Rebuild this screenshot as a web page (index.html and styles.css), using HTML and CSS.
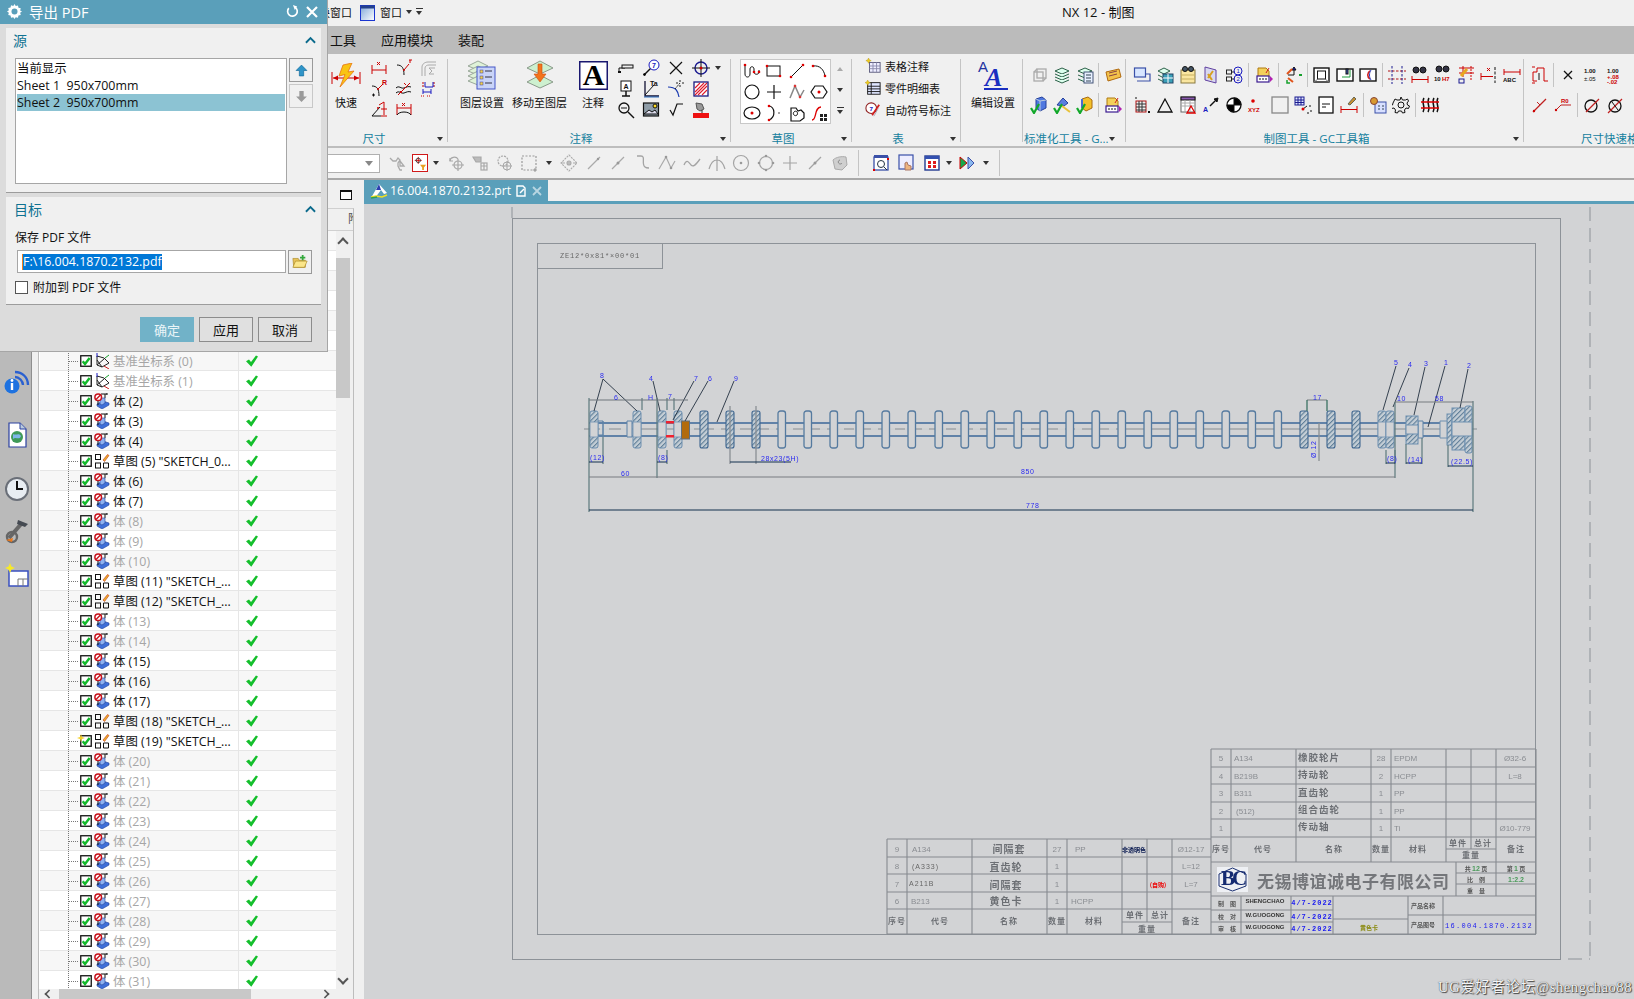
FILE: index.html
```html
<!DOCTYPE html>
<html lang="zh-CN">
<head>
<meta charset="utf-8">
<title>NX 12 - 制图</title>
<link rel="stylesheet" href="styles.css">
</head>
<body>
<svg class="defs" width="0" height="0" aria-hidden="true">
  <symbol id="cb" viewBox="0 0 12 12"><rect x=".75" y=".75" width="10.5" height="10.5" fill="#fff" stroke="#111" stroke-width="1.3"/><path d="M2.7 6.2 5 9l4.6-6" fill="none" stroke="#12b82a" stroke-width="2.4"/></symbol>
  <symbol id="ok" viewBox="0 0 12 12"><path d="M0 6.2 3 4.4l2 2.7L10 .4 12 1.6 5.3 11.8z" fill="#14bf2c"/></symbol>
  <symbol id="bd" viewBox="0 0 16 16"><path d="M7 1h6M13 0v2M11 1v4" stroke="#111" fill="none"/><path d="M3 11l6-3 6 2v2l-7 4-5-3z" fill="#3f6fd8" stroke="#24449c" stroke-width=".6"/><path d="M6 5h5v5l-3 2-2-1z" fill="#8fb2f0" stroke="#24449c" stroke-width=".6"/><circle cx="4.2" cy="4.2" r="3.3" fill="#fff" stroke="#c8121c" stroke-width="1.5"/><path d="M2 6.4 6.4 2" stroke="#c8121c" stroke-width="1.4"/><path d="M4 8v4" stroke="#111"/></symbol>
  <symbol id="sk" viewBox="0 0 16 16"><g fill="none" stroke="#111"><rect x="1.5" y="1.5" width="5" height="5"/><rect x="1.5" y="10" width="5" height="5"/><path d="M9.5 10h5v5h-5z"/></g><path d="M9 7l4.500-5.500 1.500 1L10.500 8.500z" fill="#e9b22b" stroke="#c8301c" stroke-width=".6"/></symbol>
  <symbol id="cs" viewBox="0 0 16 16"><g fill="none" stroke="#222"><path d="M3 3v9l5 2 7-4-5-5z"/><path d="M3 12l7-6M3 7l5 7"/></g><path d="M3 4V0" stroke="#1a1ac0"/><path d="M11 5l4-3" stroke="#16a02c"/><path d="M10 13l5 3" stroke="#c81c1c"/></symbol>
</svg>

<div class="app">
  <header class="titlebar">
    <span class="qa-text">切换窗口</span>
    <svg class="winicon" viewBox="0 0 15 16"><defs><linearGradient id="wg" x1="0" y1="0" x2="1" y2="1"><stop offset="0" stop-color="#7da6d8"/><stop offset="1" stop-color="#fff"/></linearGradient></defs><rect x=".5" y=".5" width="14" height="15" fill="url(#wg)" stroke="#1a35d0"/><rect x=".5" y=".5" width="14" height="3" fill="#24408c"/></svg>
    <span class="qa-label">窗口</span>
    <span class="tri qa-tri"></span>
    <span class="tri-menu"></span>
    <span class="apptitle">NX 12 - 制图</span>
  </header>

  <nav class="menubar">
    <span>工具</span><span>应用模块</span><span>装配</span>
  </nav>

  <section class="ribbon">
    <div class="group g1">
      <div class="gbody">
        <div class="big b-quick">
          <div class="bigicon"><svg class="q" viewBox="0 0 30 24"><path d="M1 9v12M29 9v12" stroke="#c00" fill="none"/><path d="M2 15h26" stroke="#c00" fill="none"/><path d="M2 15l5-2.500v5zM28 15l-5-2.500v5z" fill="#c00"/><path d="M21 0 12 2 8 13l6-1.500L9 24 23 8l-6 1z" fill="#f9c414" stroke="#e8720c" stroke-width=".8"/></svg></div>
          <span>快速</span>
        </div>
        <div class="ig ig3">
          <svg class="i" viewBox="0 0 18 18"><path d="M2 6v9M16 6v9M2 11h14" stroke="#c00"/><path d="M7 3l3 3M10 3 7 6" stroke="#c00"/></svg>
          <svg class="i" viewBox="0 0 18 18"><path d="M2 6c5 0 7 3 7 10" /><path d="M9 11l5-6" stroke="#c00"/><circle cx="9" cy="11" r="1" fill="#c00" stroke="none"/><path d="M14 1h3" stroke="#c00"/><path d="M15 1v3" stroke="#c00"/></svg>
          <svg class="i" viewBox="0 0 18 18"><g stroke="#aaa"><path d="M2 17V8c0-3 3-5 6-5h8M5 17V9c0-2 2-3 4-3h7"/><path d="M9 9h6M14 15H9l3-3-3-3"/></g></svg>
          <svg class="i" viewBox="0 0 18 18"><path d="M2 6c5 0 7 3 7 10"/><path d="M8 9l5-5" stroke="#c00"/><circle cx="8" cy="9" r="1" fill="#c00" stroke="none"/><text class="it red" x="12" y="5">R</text><path d="M2 15h3M3.500 13.500v3"/></svg>
          <svg class="i" viewBox="0 0 18 18"><path d="M1 8c3-3 5 1 8 0s4-2 7-1M1 13c3-3 5 1 8 0s4-2 7-1"/><path d="M3 15 15 3" stroke="#c00"/><path d="M9 3l2 2M5 11l2 2" stroke="#c00"/></svg>
          <svg class="i" viewBox="0 0 18 18"><g stroke="#b00" stroke-dasharray="2 1"><path d="M2 3h3M2 6h3M13 3h3M13 6h3"/></g><path d="M5 2v5h8V2M3 14v-5M11 9v5M3 12h8" stroke="#1a1ac0"/><path d="M1 16h3M7 16h3" stroke="#c00" stroke-dasharray="1 1"/></svg>
          <svg class="i" viewBox="0 0 18 18"><path d="M2 15 10 6M2 15h9"/><path d="M9 4 14 1v13M11 15h6M11 8h6" stroke="#c00"/><circle cx="8" cy="7" r="1" fill="#c00" stroke="none"/></svg>
          <svg class="i" viewBox="0 0 18 18"><path d="M2 3v11M16 3v11M2 7h14" stroke="#c00"/><path d="M7 2l3 3M10 2 7 5" stroke="#c00"/><path d="M2 14c2-4 12-4 14 0" /></svg>
        </div>
      </div>
      <div class="glabel"><span class="gl gl1">尺寸</span><span class="ga"></span></div>
    </div>

    <div class="group g2">
      <div class="gbody">
        <div class="big b-layer">
          <div class="bigicon"><svg class="bg1" viewBox="0 0 30 30"><g fill="#dff2d8" stroke="#9aa89a"><path d="M1 6 11 1l10 5-10 4z"/><path d="M1 11l10-5 10 5-10 4z"/><path d="M1 16l10-5 10 5-10 4z"/><path d="M1 21l10-5 10 5-10 4z"/></g><rect x="10" y="7" width="18" height="22" fill="#c9d4f8" stroke="#4456c8"/><g fill="#f2d24a" stroke="#3a3aa0" stroke-width=".5"><rect x="13" y="10" width="3" height="3"/><rect x="13" y="16" width="3" height="3"/><rect x="13" y="22" width="3" height="3"/></g><path d="M18 11h7M18 17h7M18 23h7" stroke="#334"/></svg></div>
          <span>图层设置</span>
        </div>
        <div class="big b-move">
          <div class="bigicon"><svg class="bg1" viewBox="0 0 30 30"><g fill="#cdf0cf" stroke="#8a9a8a"><path d="M2 8 15 1l13 7-13 6z"/><path d="M2 22l13-7 13 7-13 6z"/></g><path d="M13 4h4v10h4l-6 8-6-8h4z" fill="#f2741c" stroke="#d04a0c" stroke-width=".6"/></svg></div>
          <span>移动至图层</span>
        </div>
        <div class="big b-note">
          <div class="bigicon"><svg class="ba" viewBox="0 0 29 29"><rect x=".75" y=".75" width="27.500" height="27.500" fill="#fff" stroke="#1a1870" stroke-width="1.500"/><text x="14.500" y="24" class="bigA">A</text></svg></div>
          <span>注释</span>
        </div>
        <div class="ig ig4">
          <svg class="i" viewBox="0 0 18 18"><path d="M2 13V9h6" /><rect x="5" y="6" width="11" height="3" fill="#eee"/><path d="M1 13h3" stroke-width="2"/></svg>
          <svg class="i" viewBox="0 0 18 18"><path d="M2 16 10 8" stroke-width="1.500"/><circle cx="2.500" cy="15.500" r="1" fill="#000"/><circle cx="12" cy="6" r="5" stroke="#1a1ac0" fill="#fff"/><text class="it blue" x="10" y="9">7</text></svg>
          <svg class="i" viewBox="0 0 18 18"><path d="M3 3l12 12M15 3 3 15" stroke-width="1.200"/></svg>
          <svg class="i" viewBox="0 0 18 18"><circle cx="9" cy="9" r="6" stroke="#1a1a90" stroke-width="1.400"/><path d="M9 0v18M0 9h18"/><circle cx="9" cy="9" r="1.500" fill="#c00" stroke="none"/></svg>
          <span class="tri"></span>
          <svg class="i rs" viewBox="0 0 18 18"><rect x="4" y="1" width="10" height="10" fill="#fff"/><text class="it" x="6.500" y="9">A</text><path d="M9 11v5M5 16h8" stroke-width="1.500"/></svg>
          <svg class="i" viewBox="0 0 18 18"><path d="M3 1v15h14" stroke="#113" stroke-width="1.300"/><path d="M3 15 12 5" /><text class="it" x="8" y="6">Ta</text><path d="M2 17h15" stroke="#2a6fc0"/></svg>
          <svg class="i" viewBox="0 0 18 18"><path d="M1 7c8 0 10 4 11 10" stroke="#1a3ab0" stroke-width="1.200"/><path d="M8 9l5-6" stroke="#222" stroke-dasharray="2 1"/><path d="M13 0v2M13 5v2M9 3h2M15 3h2" stroke="#222"/></svg>
          <svg class="i" viewBox="0 0 18 18"><rect x="2" y="2" width="14" height="14" fill="#fff" stroke="#1a1a80" stroke-width="1.300"/><path d="M3 12l9-9M3 8l5-5M6 15l9-9M10 15l5-5M3 15 15 3" stroke="#e01c2c" stroke-width="1.100"/></svg>
          <svg class="i rs" viewBox="0 0 18 18"><circle cx="7" cy="7" r="5" stroke-width="1.300"/><path d="M4 7h6"/><path d="M11 11l6 6" stroke-width="1.400"/></svg>
          <svg class="i" viewBox="0 0 18 18"><rect x="1.500" y="2" width="15" height="13" fill="#8f9da8" stroke="#111" stroke-width="1.200"/><path d="M2 13l5-4 3 2 3-2 3 4z" fill="#dde"/><circle cx="13" cy="5" r="2" fill="#fd2"/></svg>
          <svg class="i" viewBox="0 0 18 18"><path d="M3 9l3 5 4-11h6" stroke-width="1.200"/></svg>
          <svg class="i" viewBox="0 0 18 18"><path d="M4 2l6 1 2 5-4 2-3-2z" fill="#999" stroke="#555"/><path d="M10 9v3" stroke="#333"/><rect x="1" y="12" width="16" height="5" fill="#ee1111" stroke="none"/></svg>
        </div>
      </div>
      <div class="glabel"><span class="gl">注释</span><span class="ga"></span></div>
    </div>

    <div class="group g3">
      <div class="gbody">
        <div class="gallery">
          <svg class="i" viewBox="0 0 18 18"><path d="M2 3v9c0 4 5 4 5 0V7c0-3 4-3 4 0v3c0 3 5 3 5 0V8"/><g fill="#d00" stroke="none"><circle cx="2" cy="3" r="1.300"/><circle cx="11" cy="10" r="1.300"/><circle cx="16" cy="10" r="1.300"/></g></svg>
          <svg class="i" viewBox="0 0 18 18"><rect x="2" y="4" width="13" height="10"/><circle cx="2" cy="4" r="1.300" fill="#d00" stroke="none"/><circle cx="15" cy="14" r="1.300" fill="#d00" stroke="none"/></svg>
          <svg class="i" viewBox="0 0 18 18"><path d="M3 15 15 3"/><circle cx="3" cy="15" r="1.300" fill="#d00" stroke="none"/><circle cx="15" cy="3" r="1.300" fill="#d00" stroke="none"/></svg>
          <svg class="i" viewBox="0 0 18 18"><path d="M3 4c7-1 11 4 12 10"/><circle cx="3" cy="4" r="1.300" fill="#d00" stroke="none"/><circle cx="15" cy="14" r="1.300" fill="#d00" stroke="none"/></svg>
          <svg class="i" viewBox="0 0 18 18"><circle cx="9" cy="9" r="7" stroke-width="1.200"/></svg>
          <svg class="i" viewBox="0 0 18 18"><path d="M9 2v14M2 9h14" stroke-width="1.200"/></svg>
          <svg class="i" viewBox="0 0 18 18"><path d="M2 15 7 3l5 11 4-7" stroke="#888" stroke-width="1.500"/><g fill="#d33" stroke="none"><circle cx="7" cy="3" r="1.300"/><circle cx="12" cy="14" r="1.300"/></g></svg>
          <svg class="i" viewBox="0 0 18 18"><path d="M5 3h8l4 6-4 6H5L1 9z" stroke-width="1.200"/><circle cx="9" cy="9" r="1.500" fill="#d00" stroke="none"/></svg>
          <svg class="i" viewBox="0 0 18 18"><ellipse cx="9" cy="9" rx="8" ry="6" stroke-width="1.200"/><circle cx="9" cy="9" r="1.500" fill="#d00" stroke="none"/></svg>
          <svg class="i" viewBox="0 0 18 18"><path d="M4 2c6 1 7 11 0 14" stroke-width="1.200"/><g fill="#d00" stroke="none"><circle cx="4" cy="2" r="1.300"/><circle cx="4" cy="16" r="1.300"/></g><circle cx="14" cy="9" r="1" fill="#888" stroke="none"/></svg>
          <svg class="i" viewBox="0 0 18 18"><path d="M3 4h5l2 3 3-1 3 3v5l-4 3H3z" stroke-width="1.200"/><path d="M6 8c1-2 5 0 3 3-2 2-5-1-3-3z"/></svg>
          <svg class="i" viewBox="0 0 18 18"><path d="M2 16c5 0 2-13 9-13" stroke="#d00" stroke-width="1.300"/><g fill="#222" stroke="none"><rect x="10" y="10" width="3" height="3"/><rect x="14" y="10" width="3" height="3"/><rect x="10" y="14" width="3" height="3"/><rect x="14" y="14" width="3" height="3"/></g></svg>
        </div>
        <div class="galside"><span class="tri up"></span><span class="tri"></span><span class="tri-menu"></span></div>
      </div>
      <div class="glabel"><span class="gl">草图</span><span class="ga"></span></div>
    </div>

    <div class="group g4">
      <div class="gbody tlist">
        <div class="tline"><svg class="i16" viewBox="0 0 18 18"><rect x="5" y="5" width="12" height="11" fill="#eef" stroke="#557"/><path d="M5 9h12M5 12h12M9 5v11M13 5v11" stroke="#88a"/><path d="M4 0l1 2 2 1-2 1-1 2-1-2-2-1 2-1z" fill="#ec2" stroke="#a80" stroke-width=".4"/></svg><span>表格注释</span></div>
        <div class="tline"><svg class="i16" viewBox="0 0 18 18"><rect x="3" y="3" width="14" height="13" fill="#dfe6ff" stroke="#111"/><path d="M3 7h14M3 10h14M3 13h14M7 3v13" stroke="#111"/><path d="M3 0l1 2 2 1-2 1-1 2-1-2-2-1 2-1z" fill="#ec2" stroke="#a80" stroke-width=".4"/></svg><span>零件明细表</span></div>
        <div class="tline"><svg class="i16" viewBox="0 0 18 18"><circle cx="7" cy="7" r="6" fill="#fff" stroke="#902020" stroke-width="1.200"/><text class="it blue" x="5" y="10">7</text><path d="M8 15 16 3" stroke="#d02020" stroke-width="2"/><path d="M10 16l5-9" stroke="#aab" stroke-width="1"/></svg><span>自动符号标注</span></div>
      </div>
      <div class="glabel"><span class="gl">表</span><span class="ga"></span></div>
    </div>

    <div class="group g5">
      <div class="gbody">
        <div class="big b-edit">
          <div class="bigicon"><svg class="bg2" viewBox="0 0 32 34"><text x="1" y="14" class="aa1">A</text><text x="8" y="28" class="aa2">A</text><path d="M7 31h24" stroke="#1a2ec0" stroke-width="2"/></svg></div>
          <span>编辑设置</span>
        </div>
      </div>
      <div class="glabel"><span class="gl"></span></div>
    </div>

    <div class="group g6">
      <div class="gbody">
        <div class="irow">
          <svg class="ic" viewBox="0 0 18 18"><g stroke="#aaa" stroke-width="1.300"><rect x="4" y="6" width="9" height="9"/><rect x="7" y="3" width="9" height="9"/><path d="M4 6l3-3M13 15l3-3"/></g></svg>
          <svg class="ic" viewBox="0 0 18 18"><g stroke="#2c6048" fill="#dfe"><path d="M2 5l7-3 7 3-7 3z"/><path d="M2 8l7 3 7-3"/><path d="M2 11l7 3 7-3"/><path d="M2 14l7 3 7-3"/></g></svg>
          <svg class="ic" viewBox="0 0 18 18"><g stroke="#2c6048" fill="#dfe"><path d="M2 5l7-3 7 3-7 3z"/><path d="M2 9l7 3 7-3"/><path d="M2 13l7 3 7-3"/></g><rect x="8" y="6" width="9" height="11" fill="#e8f0ff" stroke="#457"/><path d="M10 9h5M10 12h5M10 15h5" stroke="#345"/></svg>
          <span class="vs vs-n"></span>
          <svg class="ic" viewBox="0 0 18 18"><path d="M2 6l13-3 2 8-13 4z" fill="#f3c24a" stroke="#b06a10"/><path d="M5 7l8-2M5 10l8-2" stroke="#844"/></svg>
        </div>
        <div class="irow">
          <svg class="ic" viewBox="0 0 18 18"><path d="M6 3l6-2 4 3v8l-6 3-4-3z" fill="#4f78e0" stroke="#24409c"/><path d="M10 15V5l6-1M10 5 6 3" stroke="#bcd"/><path d="M1 12l3 5 5-9" stroke="#12a82a" stroke-width="2.200"/></svg>
          <svg class="ic" viewBox="0 0 18 18"><path d="M4 9l6-7 5 5-4 3z" fill="#5a7ee0" stroke="#24409c"/><path d="M9 10l8 6" stroke="#e8c23a" stroke-width="2"/><path d="M1 12l3 5 5-9" stroke="#12a82a" stroke-width="2.200"/></svg>
          <svg class="ic" viewBox="0 0 18 18"><path d="M6 3l6-2 4 3v8l-6 3-4-3z" fill="#f3c12a" stroke="#a86a10"/><path d="M6 3v9" stroke="#4a6cd0" stroke-width="2"/><path d="M1 12l3 5 5-9" stroke="#12a82a" stroke-width="2.200"/></svg>
          <span class="vs vs-n"></span>
          <svg class="ic" viewBox="0 0 18 18"><path d="M3 2h8l3 3v6H3z" fill="#f3d15a" stroke="#b07a10"/><rect x="2" y="10" width="12" height="6" fill="#fff" stroke="#3a1a90" stroke-width="1.200"/><path d="M4 13h2M7 13h2M10 13h2" stroke="#111"/><path d="M15 10l3 3-3 3z" fill="#b020b0" stroke="none"/><path d="M14 2l-3 5" stroke="#d02020"/></svg>
        </div>
      </div>
      <div class="glabel"><span class="gl gl-left">标准化工具 - G...</span><span class="ga ga-n"></span></div>
    </div>

    <div class="group g7">
      <div class="gbody">
        <div class="irow">
          <svg class="ic" viewBox="0 0 18 18"><rect x="1.500" y="2" width="11" height="9" fill="#d8e6ff" stroke="#3a50a8" stroke-width="1.200"/><path d="M4 15h13V8h-4" stroke="#3a50a8" stroke-width="1.200"/></svg>
          <svg class="ic" viewBox="0 0 18 18"><g stroke="#2c6048" fill="#dfe"><path d="M2 5l6-3 6 3-6 3z"/><path d="M2 9l6 3 6-3"/><path d="M2 13l6 3 6-3"/></g><rect x="7" y="8" width="10" height="9" fill="#3a9fb8" stroke="#246"/><path d="M12 8v9M7 12h10" stroke="#fff"/></svg>
          <svg class="ic" viewBox="0 0 18 18"><rect x="2" y="4" width="14" height="13" fill="#fae6a0" stroke="#8a7a40"/><path d="M2 9h14M2 13h14" stroke="#c8b060"/><circle cx="6" cy="3" r="2.500" fill="#456"/><circle cx="12" cy="3" r="2.500" fill="#456"/></svg>
          <svg class="ic" viewBox="0 0 18 18"><path d="M3 1l11 3v13L3 14z" fill="#d8d8f0" stroke="#6040a0"/><path d="M6 12l5-7M6 8l4 6" stroke="#d8a020" stroke-width="2"/></svg>
          <svg class="ic" viewBox="0 0 18 18"><rect x="1.500" y="4" width="5" height="4" stroke="#222"/><rect x="1.500" y="11" width="5" height="4" stroke="#222"/><path d="M6 6h4M6 13h4" stroke="#222"/><circle cx="13" cy="5" r="4" stroke="#1a1ac0"/><circle cx="13" cy="13" r="4" stroke="#1a1ac0"/><text class="it6 blue" x="11.500" y="7">1</text><text class="it6 blue" x="11.500" y="15">2</text></svg>
          <span class="vs"></span>
          <svg class="ic" viewBox="0 0 18 18"><path d="M3 2h8l3 3v6H3z" fill="#f3d15a" stroke="#b07a10"/><rect x="2" y="10" width="12" height="6" fill="#fff" stroke="#3a1a90" stroke-width="1.200"/><path d="M4 13h2M7 13h2M10 13h2" stroke="#111"/><path d="M15 10l3 3-3 3z" fill="#b020b0" stroke="none"/><path d="M14 2l-3 5" stroke="#d02020"/></svg>
          <span class="vs"></span>
          <svg class="ic" viewBox="0 0 18 18"><path d="M9 3v6H3" stroke="#111"/><path d="M9 1l2 3H7z" fill="#1a1ac0"/><path d="M14 9h3" stroke="#16a02c" stroke-width="2"/><path d="M2 8l5-5M3 12l5 4" stroke="#e0541c" stroke-width="2"/><path d="M2 14v3h3" stroke="#16a02c" stroke-width="1.500"/></svg>
          <span class="vs vs-n"></span>
          <svg class="ic" viewBox="0 0 18 18"><rect x="1" y="2" width="15" height="14" fill="#fff" stroke="#111" stroke-width="1.400"/><rect x="4.500" y="5" width="8" height="8" stroke="#111"/><path d="M1 16l4-3M12 13l4 3" stroke="#777"/></svg>
          <svg class="ic" viewBox="0 0 18 18"><rect x="1" y="3" width="16" height="12" fill="#fff" stroke="#111" stroke-width="1.400"/><path d="M6 11h8V4" stroke="#1a9a3a"/><rect x="10" y="3" width="2" height="5" fill="#3a5ac0"/></svg>
          <svg class="ic" viewBox="0 0 18 18"><rect x="1" y="3" width="16" height="12" fill="#fff" stroke="#111" stroke-width="1.400"/><path d="M11 5c-3 2-3 6 0 8" stroke="#d02020" stroke-width="1.600"/><path d="M12 4c-2 3-2 7 0 10" stroke="#2a40c0"/></svg>
          <span class="vs vs-m"></span>
          <svg class="ic" viewBox="0 0 18 18"><g stroke="#b01010" stroke-dasharray="2.500 1.500"><path d="M0 5h18M0 13h18"/></g><g stroke="#1a1a90" stroke-dasharray="2.500 1.500"><path d="M4 0v18M14 0v18"/></g></svg>
          <svg class="ic" viewBox="0 0 18 18"><circle cx="5" cy="4" r="3" fill="#334"/><circle cx="12" cy="4" r="3" fill="#334"/><path d="M1 10v7M17 10v7M1 13.500h16" stroke="#c00"/></svg>
          <svg class="ic ic-w" viewBox="0 0 18 18"><circle cx="5" cy="3" r="3" fill="#334"/><circle cx="12" cy="3" r="3" fill="#334"/><text class="it6 bold" x="0" y="15">10</text><text class="it6 red" x="8" y="15">H7</text></svg>
          <svg class="ic" viewBox="0 0 18 18"><path d="M2 2h15M2 7h15M6 0v11" stroke="#c00"/><path d="M4 10l6-7" stroke="#e8a820" stroke-width="3"/><rect x="2" y="13" width="5" height="4" stroke="#1a1a90"/><path d="M14 0v14" stroke="#c00" stroke-dasharray="2 1"/></svg>
          <svg class="ic" viewBox="0 0 18 18"><path d="M1 7v7M1 10.500h12" stroke="#c00"/><path d="M15 1v16" stroke-dasharray="3 1.500"/><path d="M7 2l3 3M10 2 7 5" stroke="#c00"/></svg>
          <svg class="ic ic-w" viewBox="0 0 18 18"><path d="M1 3v6M17 3v6M1 6h16" stroke="#c00"/><text class="it6 bold" x="0" y="16">ABC</text></svg>
        </div>
        <div class="irow">
          <svg class="ic" viewBox="0 0 18 18"><path d="M3 1v2" stroke="#111"/><rect x="3" y="5" width="10" height="11" stroke="#b01010"/><path d="M3 8h10M3 11h10M3 14h10M6 5v11M9 5v11" stroke="#333"/><path d="M15 15l2 2M17 15l-2 2" stroke="#111"/></svg>
          <svg class="ic" viewBox="0 0 18 18"><path d="M9 3 2 16h14z" stroke-width="1.300"/></svg>
          <svg class="ic" viewBox="0 0 18 18"><rect x="2" y="1" width="14" height="15" fill="#fff" stroke="#666"/><rect x="2" y="1" width="14" height="3" fill="#8a5ab0"/><path d="M2 7h14M2 10h14M6 4v12M11 4v12" stroke="#aaa"/><path d="M12 10l-4 7h8z" fill="none" stroke="#d00" stroke-width="1.300"/></svg>
          <svg class="ic" viewBox="0 0 18 18"><text class="it blue" x="1" y="16">A</text><path d="M8 10l7-7" stroke-width="1.500"/><path d="M16 2l-1 4-3-3z" fill="#111"/></svg>
          <svg class="ic" viewBox="0 0 18 18"><circle cx="9" cy="9" r="7" fill="#fff" stroke-width="1.300"/><path d="M9 2a7 7 0 0 1 7 7H9zM9 9v7a7 7 0 0 1-7-7z" fill="#000"/></svg>
          <svg class="ic ic-w" viewBox="0 0 18 18"><circle cx="5" cy="5" r="1.800" fill="#d00" stroke="none"/><text class="it6 red" x="0" y="16">XYZ</text></svg>
          <svg class="ic" viewBox="0 0 18 18"><rect x="1" y="1" width="16" height="16" stroke="#888" stroke-width="1.300"/></svg>
          <svg class="ic" viewBox="0 0 18 18"><rect x="1" y="1" width="9" height="8" fill="#dfe6ff" stroke="#1a1a90"/><path d="M1 4h9M1 6.500h9M4 1v8M7 1v8" stroke="#1a1a90"/><path d="M9 13l4-3M15 10h2M17 14v2M13 17h2" stroke="#111"/><circle cx="9" cy="13" r="1.500" fill="#d00" stroke="none"/></svg>
          <svg class="ic" viewBox="0 0 18 18"><rect x="2" y="1" width="14" height="16" fill="#fff" stroke-width="1.300"/><path d="M5 8h8M5 11h4" /></svg>
          <svg class="ic" viewBox="0 0 18 18"><path d="M8 8l6-7 2 2-6 6z" fill="#c89030" stroke="#665"/><path d="M1 10v7M17 10v7M1 13.500h16" stroke="#c00"/></svg>
          <span class="vs vs-m"></span>
          <svg class="ic" viewBox="0 0 18 18"><rect x="6" y="6" width="11" height="11" fill="#d8e0ff" stroke="#3a50a8"/><circle cx="5" cy="5" r="3.500" fill="#d89a30" stroke="#843"/><path d="M9 10h2M9 13h2M13 10h2M13 13h2" stroke="#345"/></svg>
          <svg class="ic" viewBox="0 0 18 18"><circle cx="9" cy="9" r="3" /><path d="M9 1l1.500 3h3l2-1 1 2-1.500 2 .5 2 2 1-1 2.500-2.500-.5-1.500 2 .5 2.500-2.500.5-1-2h-3l-1 2-2.500-.5.5-2.500-1.500-2-2.500.5-1-2.500 2-1 .5-2L2 5l1-2 2 1h3z"/></svg>
          <span class="vs vs-m"></span>
          <svg class="ic" viewBox="0 0 18 18"><path d="M3 2c-3 5 2 9-1 14M8 2c-3 5 2 9-1 14M13 2c-3 5 2 9-1 14M17 2c-3 5 2 9-1 14" stroke-width="1.500"/><path d="M0 6h18M0 12h18" stroke="#d00" stroke-width="1.300"/></svg>
        </div>
      </div>
      <div class="glabel"><span class="gl">制图工具 - GC工具箱</span><span class="ga"></span></div>
    </div>

    <div class="group g8">
      <div class="gbody">
        <div class="irow">
          <svg class="ic" viewBox="0 0 18 18"><path d="M6 2v4H2v9h4M6 2h7v13M13 15h4" stroke="#c00"/><path d="M8 7v7" /><path d="M1 1h3M1 17h3" stroke="#c00"/></svg>
          <span class="vs vs-n"></span>
          <svg class="ic" viewBox="0 0 18 18"><path d="M5 5l8 8M13 5l-8 8" stroke-width="1.300"/></svg>
          <svg class="ic" viewBox="0 0 18 18"><text class="it6 bold" x="2" y="7">1.00</text><text class="it6" x="2" y="15">±.05</text></svg>
          <svg class="ic" viewBox="0 0 18 18"><text class="it6 bold" x="2" y="7">1.00</text><text class="it6 red" x="2" y="13">+.08</text><text class="it6 red" x="2" y="18">-.02</text></svg>
        </div>
        <div class="irow">
          <svg class="ic" viewBox="0 0 18 18"><path d="M2 16 15 3" stroke="#c02020" stroke-width="1.200"/><path d="M6 6l3 3" stroke="#c02020"/><circle cx="3" cy="15" r="1.200" fill="#c00" stroke="none"/></svg>
          <svg class="ic" viewBox="0 0 18 18"><path d="M2 14 7 9h10" stroke="#c02020"/><text class="it6 red" x="7" y="7">R0</text><circle cx="2" cy="14" r="1.200" fill="#c00" stroke="none"/></svg>
          <span class="vs vs-m"></span>
          <svg class="ic" viewBox="0 0 18 18"><circle cx="8" cy="10" r="6" stroke-width="1.300"/><path d="M3 16 16 3" stroke="#c02020" stroke-width="1.300"/></svg>
          <svg class="ic" viewBox="0 0 18 18"><circle cx="9" cy="10" r="6" stroke-width="1.300"/><path d="M2 17 16 3" stroke="#c02020" stroke-width="1.300"/><path d="M6 6l6 8" /></svg>
        </div>
      </div>
      <div class="glabel"><span class="gl gl-left gl8">尺寸快速格</span></div>
    </div>
  </section>

  <section class="toolbar">
    <div class="combo"><span class="combo-arrow"></span></div>
    <svg class="t tw1" viewBox="0 0 18 18"><path d="M2 4l3 3h3l2-3 2 2-2 3v3l2 4h2M12 7l4 5h-4z" stroke="#aaa" stroke-width="1.300"/></svg>
    <span class="selbox"><svg class="i16" viewBox="0 0 16 16"><path d="M6 1v8M2 5h8" stroke="#c00"/><circle cx="6" cy="5" r="2.500" stroke="#333"/><path d="M8 10h7l-2.500 3v3h-2v-3z" fill="#e8a020" stroke="none"/></svg></span>
    <span class="ta ta16"><span class="tri"></span></span>
    <svg class="t" viewBox="0 0 18 18"><g stroke="#a8a8a8" stroke-width="1.200"><path d="M3 7c0-4 6-5 8-2"/><path d="M3 4v3h3"/><circle cx="11" cy="11" r="4"/><path d="M11 5v12M5 11h12"/></g></svg>
    <svg class="t" viewBox="0 0 18 18"><g stroke="#a8a8a8" stroke-width="1.200"><path d="M2 3h8v5H5z" fill="#bbb"/><rect x="10" y="9" width="6" height="7"/><path d="M10 12h6M13 9v7"/></g></svg>
    <svg class="t" viewBox="0 0 18 18"><g stroke="#a8a8a8" stroke-width="1.200" stroke-dasharray="2 1"><circle cx="7" cy="7" r="5"/></g><g stroke="#a8a8a8"><circle cx="11" cy="12" r="4"/><path d="M11 7v10M6 12h10"/></g></svg>
    <svg class="t" viewBox="0 0 18 18"><rect x="2" y="2" width="14" height="14" stroke="#999" stroke-width="1.200" stroke-dasharray="2 1.500"/><path d="M13 16h4M15 14v4" stroke="#999"/></svg>
    <span class="ta ta15"><span class="tri"></span></span>
    <svg class="t" viewBox="0 0 18 18"><g stroke="#aaa" stroke-width="1.100"><path d="M9 1 17 9 9 17 1 9z" stroke-dasharray="2 1"/><circle cx="9" cy="9" r="2" fill="#bbb"/><path d="M5 9H1M17 9h-4"/></g></svg>
    <svg class="t" viewBox="0 0 18 18"><path d="M3 15 15 3" stroke="#aaa" stroke-width="1.200"/><circle cx="13" cy="5" r="1.200" fill="#999"/></svg>
    <svg class="t" viewBox="0 0 18 18"><path d="M3 15 15 3" stroke="#aaa" stroke-width="1.200"/><circle cx="9" cy="9" r="1.500" fill="#999"/></svg>
    <svg class="t" viewBox="0 0 18 18"><path d="M3 2h4c5 0 0 8 4 11 1 1 3 1 4 1" stroke="#a4a4a4" stroke-width="1.300"/></svg>
    <svg class="t" viewBox="0 0 18 18"><path d="M1 15 8 3l5 11 4-7" stroke="#aaa" stroke-width="1.200"/><circle cx="8" cy="3" r="1.300" fill="#999"/><circle cx="13" cy="14" r="1.300" fill="#999"/></svg>
    <svg class="t" viewBox="0 0 18 18"><path d="M1 11c3-7 5-2 7 0s4 1 9-6" stroke="#a4a4a4" stroke-width="1.300"/></svg>
    <svg class="t" viewBox="0 0 18 18"><path d="M1 15C3 8 6 6 9 6s6 2 8 9M9 2v15" stroke="#a4a4a4" stroke-width="1.200"/></svg>
    <svg class="t" viewBox="0 0 18 18"><circle cx="9" cy="9" r="7.500" stroke="#a4a4a4" stroke-width="1.200"/><circle cx="9" cy="9" r="1.300" fill="#999"/></svg>
    <svg class="t" viewBox="0 0 18 18"><circle cx="9" cy="9" r="6.500" stroke="#a4a4a4" stroke-width="1.200"/><g fill="#999"><circle cx="9" cy="2" r="1.300"/><circle cx="9" cy="16" r="1.300"/><circle cx="2" cy="9" r="1.300"/><circle cx="16" cy="9" r="1.300"/></g></svg>
    <svg class="t" viewBox="0 0 18 18"><path d="M9 2v14M2 9h14" stroke="#a4a4a4" stroke-width="1.200"/></svg>
    <svg class="t" viewBox="0 0 18 18"><path d="M3 15 15 3" stroke="#a4a4a4" stroke-width="1.200"/><circle cx="9" cy="9" r="1.500" fill="#999"/></svg>
    <svg class="t" viewBox="0 0 18 18"><path d="M2 6c3-3 9-4 13-3l1 8-5 5-7-1z" fill="#cfcfcf" stroke="#aaa"/><path d="M9 6a2 2 0 1 0 2 3" stroke="#888"/></svg>
    <span class="vs tb-vs"></span>
    <svg class="t" viewBox="0 0 18 18"><rect x="2" y="3" width="14" height="13" fill="#fff" stroke="#3a50a8" stroke-width="1.300"/><rect x="2" y="1" width="14" height="3" fill="#3a50a8"/><circle cx="9" cy="10" r="3.500" stroke="#234"/><path d="M12 13l3 3" stroke="#234"/><g fill="#d00"><rect x="1" y="15" width="2" height="2"/><rect x="15" y="4" width="2" height="2"/></g></svg>
    <svg class="t" viewBox="0 0 18 18"><rect x="2" y="1" width="14" height="14" fill="#eef" stroke="#3a50a8" stroke-width="1.200"/><path d="M8 9v7h6v-4l-3-1-1-3z" fill="#eeb580" stroke="#a76"/></svg>
    <svg class="t tw2" viewBox="0 0 18 18"><rect x="2" y="2" width="14" height="14" fill="#fff" stroke="#233a90" stroke-width="1.400"/><rect x="2" y="2" width="14" height="3" fill="#3350b0"/><g fill="#e01c1c"><rect x="5" y="7" width="3" height="3"/><rect x="10" y="7" width="3" height="3"/><rect x="5" y="11" width="3" height="3"/><rect x="10" y="11" width="3" height="3"/></g></svg>
    <span class="ta ta11"><span class="tri"></span></span>
    <svg class="t" viewBox="0 0 18 18"><path d="M3 3l7 6-7 6z" fill="#16a84a" stroke="#c00"/><path d="M11 3l6 6-6 6z" fill="#8ab8ee" stroke="#3a50a8"/></svg>
    <span class="ta ta11 ta-last"><span class="tri"></span></span>
    <span class="vs tb-vs2"></span>
  </section>

  <main class="work">
    <aside class="rail">
      <svg class="ri ri1" viewBox="0 0 26 26"><path d="M11 3c7 0 13 5 13 13M11 8c4 0 8 4 8 8" stroke="#2a60d0" stroke-width="2.400" fill="none"/><circle cx="8" cy="17" r="7.500" fill="#1e72e0"/><path d="M8 14v7" stroke="#fff" stroke-width="2.400"/><circle cx="8" cy="11.500" r="1.400" fill="#fff"/></svg>
      <svg class="ri ri2" viewBox="0 0 26 26"><path d="M5 1h11l6 6v18H5z" fill="#fff" stroke="#2a40a0" stroke-width="1.200"/><path d="M16 1v6h6" fill="#bcd" stroke="#2a40a0"/><circle cx="13" cy="15" r="6" fill="#3f9a58"/><path d="M9 12c3 2 6-2 8 2-2 5-5 0-8 3z" fill="#7fb6e8"/></svg>
      <svg class="ri ri3" viewBox="0 0 26 26"><circle cx="13" cy="13" r="11" fill="#e8edf2" stroke="#6a6f78" stroke-width="2"/><path d="M13 5v8h6" stroke="#111" stroke-width="2" fill="none"/></svg>
      <svg class="ri ri4" viewBox="0 0 26 26"><path d="M5 20 18 5" stroke="#666" stroke-width="4"/><path d="M14 2l10 4-3 3-8-3z" fill="#454a52"/><circle cx="8" cy="19" r="5" fill="none" stroke="#666" stroke-width="2.400"/><path d="M2 22l7-2-1 4z" fill="#ee7a1c"/></svg>
      <svg class="ri ri5" viewBox="0 0 26 26"><rect x="5" y="9" width="19" height="15" fill="#fff" stroke="#3a50c0" stroke-width="1.500"/><path d="M14 17h10M14 17v7M19 17v7" stroke="#777"/><path d="M6 1l1.500 3.500L11 6 7.500 7.500 6 11 4.500 7.500 1 6l3.500-1.500z" fill="#f6e92a"/></svg>
    </aside>

    <section class="nav">
      <div class="navtop"><span class="winbox"></span></div>
      <div class="navbox">
        <div class="navhead"><span class="nh-cut">附</span></div>
        <div class="navbody">
          <div class="tree">
            <div class="row"></div><div class="row"></div><div class="row"></div><div class="row"></div><div class="row"></div><div class="row"></div>
            <div class="row off"><div class="name"><i class="twig"></i><svg class="cb"><use href="#cb"/></svg><svg class="ti"><use href="#cs"/></svg><span>基准坐标系 (0)</span></div><svg class="ok"><use href="#ok"/></svg></div>
            <div class="row off"><div class="name"><i class="twig"></i><svg class="cb"><use href="#cb"/></svg><svg class="ti"><use href="#cs"/></svg><span>基准坐标系 (1)</span></div><svg class="ok"><use href="#ok"/></svg></div>
            <div class="row"><div class="name"><i class="twig"></i><svg class="cb"><use href="#cb"/></svg><svg class="ti"><use href="#bd"/></svg><span>体 (2)</span></div><svg class="ok"><use href="#ok"/></svg></div>
            <div class="row"><div class="name"><i class="twig"></i><svg class="cb"><use href="#cb"/></svg><svg class="ti"><use href="#bd"/></svg><span>体 (3)</span></div><svg class="ok"><use href="#ok"/></svg></div>
            <div class="row"><div class="name"><i class="twig"></i><svg class="cb"><use href="#cb"/></svg><svg class="ti"><use href="#bd"/></svg><span>体 (4)</span></div><svg class="ok"><use href="#ok"/></svg></div>
            <div class="row"><div class="name"><i class="twig"></i><svg class="cb"><use href="#cb"/></svg><svg class="ti"><use href="#sk"/></svg><span>草图 (5) "SKETCH_0...</span></div><svg class="ok"><use href="#ok"/></svg></div>
            <div class="row"><div class="name"><i class="twig"></i><svg class="cb"><use href="#cb"/></svg><svg class="ti"><use href="#bd"/></svg><span>体 (6)</span></div><svg class="ok"><use href="#ok"/></svg></div>
            <div class="row"><div class="name"><i class="twig"></i><svg class="cb"><use href="#cb"/></svg><svg class="ti"><use href="#bd"/></svg><span>体 (7)</span></div><svg class="ok"><use href="#ok"/></svg></div>
            <div class="row off"><div class="name"><i class="twig"></i><svg class="cb"><use href="#cb"/></svg><svg class="ti"><use href="#bd"/></svg><span>体 (8)</span></div><svg class="ok"><use href="#ok"/></svg></div>
            <div class="row off"><div class="name"><i class="twig"></i><svg class="cb"><use href="#cb"/></svg><svg class="ti"><use href="#bd"/></svg><span>体 (9)</span></div><svg class="ok"><use href="#ok"/></svg></div>
            <div class="row off"><div class="name"><i class="twig"></i><svg class="cb"><use href="#cb"/></svg><svg class="ti"><use href="#bd"/></svg><span>体 (10)</span></div><svg class="ok"><use href="#ok"/></svg></div>
            <div class="row"><div class="name"><i class="twig"></i><svg class="cb"><use href="#cb"/></svg><svg class="ti"><use href="#sk"/></svg><span>草图 (11) "SKETCH_...</span></div><svg class="ok"><use href="#ok"/></svg></div>
            <div class="row"><div class="name"><i class="twig"></i><svg class="cb"><use href="#cb"/></svg><svg class="ti"><use href="#sk"/></svg><span>草图 (12) "SKETCH_...</span></div><svg class="ok"><use href="#ok"/></svg></div>
            <div class="row off"><div class="name"><i class="twig"></i><svg class="cb"><use href="#cb"/></svg><svg class="ti"><use href="#bd"/></svg><span>体 (13)</span></div><svg class="ok"><use href="#ok"/></svg></div>
            <div class="row off"><div class="name"><i class="twig"></i><svg class="cb"><use href="#cb"/></svg><svg class="ti"><use href="#bd"/></svg><span>体 (14)</span></div><svg class="ok"><use href="#ok"/></svg></div>
            <div class="row"><div class="name"><i class="twig"></i><svg class="cb"><use href="#cb"/></svg><svg class="ti"><use href="#bd"/></svg><span>体 (15)</span></div><svg class="ok"><use href="#ok"/></svg></div>
            <div class="row"><div class="name"><i class="twig"></i><svg class="cb"><use href="#cb"/></svg><svg class="ti"><use href="#bd"/></svg><span>体 (16)</span></div><svg class="ok"><use href="#ok"/></svg></div>
            <div class="row"><div class="name"><i class="twig"></i><svg class="cb"><use href="#cb"/></svg><svg class="ti"><use href="#bd"/></svg><span>体 (17)</span></div><svg class="ok"><use href="#ok"/></svg></div>
            <div class="row"><div class="name"><i class="twig"></i><svg class="cb"><use href="#cb"/></svg><svg class="ti"><use href="#sk"/></svg><span>草图 (18) "SKETCH_...</span></div><svg class="ok"><use href="#ok"/></svg></div>
            <div class="row"><div class="name star"><i class="twig"></i><svg class="cb"><use href="#cb"/></svg><svg class="ti"><use href="#sk"/></svg><span>草图 (19) "SKETCH_...</span></div><svg class="ok"><use href="#ok"/></svg></div>
            <div class="row off"><div class="name"><i class="twig"></i><svg class="cb"><use href="#cb"/></svg><svg class="ti"><use href="#bd"/></svg><span>体 (20)</span></div><svg class="ok"><use href="#ok"/></svg></div>
            <div class="row off"><div class="name"><i class="twig"></i><svg class="cb"><use href="#cb"/></svg><svg class="ti"><use href="#bd"/></svg><span>体 (21)</span></div><svg class="ok"><use href="#ok"/></svg></div>
            <div class="row off"><div class="name"><i class="twig"></i><svg class="cb"><use href="#cb"/></svg><svg class="ti"><use href="#bd"/></svg><span>体 (22)</span></div><svg class="ok"><use href="#ok"/></svg></div>
            <div class="row off"><div class="name"><i class="twig"></i><svg class="cb"><use href="#cb"/></svg><svg class="ti"><use href="#bd"/></svg><span>体 (23)</span></div><svg class="ok"><use href="#ok"/></svg></div>
            <div class="row off"><div class="name"><i class="twig"></i><svg class="cb"><use href="#cb"/></svg><svg class="ti"><use href="#bd"/></svg><span>体 (24)</span></div><svg class="ok"><use href="#ok"/></svg></div>
            <div class="row off"><div class="name"><i class="twig"></i><svg class="cb"><use href="#cb"/></svg><svg class="ti"><use href="#bd"/></svg><span>体 (25)</span></div><svg class="ok"><use href="#ok"/></svg></div>
            <div class="row off"><div class="name"><i class="twig"></i><svg class="cb"><use href="#cb"/></svg><svg class="ti"><use href="#bd"/></svg><span>体 (26)</span></div><svg class="ok"><use href="#ok"/></svg></div>
            <div class="row off"><div class="name"><i class="twig"></i><svg class="cb"><use href="#cb"/></svg><svg class="ti"><use href="#bd"/></svg><span>体 (27)</span></div><svg class="ok"><use href="#ok"/></svg></div>
            <div class="row off"><div class="name"><i class="twig"></i><svg class="cb"><use href="#cb"/></svg><svg class="ti"><use href="#bd"/></svg><span>体 (28)</span></div><svg class="ok"><use href="#ok"/></svg></div>
            <div class="row off"><div class="name"><i class="twig"></i><svg class="cb"><use href="#cb"/></svg><svg class="ti"><use href="#bd"/></svg><span>体 (29)</span></div><svg class="ok"><use href="#ok"/></svg></div>
            <div class="row off"><div class="name"><i class="twig"></i><svg class="cb"><use href="#cb"/></svg><svg class="ti"><use href="#bd"/></svg><span>体 (30)</span></div><svg class="ok"><use href="#ok"/></svg></div>
            <div class="row off"><div class="name"><i class="twig"></i><svg class="cb"><use href="#cb"/></svg><svg class="ti"><use href="#bd"/></svg><span>体 (31)</span></div><svg class="ok"><use href="#ok"/></svg></div>
          </div>
          <div class="vscroll"><span class="chev chev-up"></span><span class="vthumb"></span><span class="chev chev-down"></span></div>
        </div>
        <div class="hscroll"><span class="chev chev-left"></span><span class="hthumb"></span><span class="chev chev-right"></span></div>
      </div>
    </section>

    <section class="view">
      <div class="tabrow">
        <div class="doctab">
          <svg class="tabicon" viewBox="0 0 18 16"><path d="M1 15 9 1l8 9-3 1-3-4-6 8z" fill="#fff"/><path d="M1 14l5-1 6 1 5-2" stroke="#f0e020" fill="none" stroke-width="1.500"/><path d="M9 1l-3 6 5 0z" fill="#2a3fb0"/><path d="M1 15l6-1" stroke="#2fa050" stroke-width="1.500"/></svg>
          <span class="tabname">16.004.1870.2132.prt</span>
          <svg class="tabdoc" viewBox="0 0 10 12"><path d="M1 1h6l2 2v8H1z" fill="none" stroke="#fff" stroke-width="1.400"/><path d="M4 8l4-4" stroke="#fff" stroke-width="1.400"/></svg>
          <svg class="tabx" viewBox="0 0 10 10"><path d="M1 1l8 8M9 1 1 9" stroke="#b8d6e2" stroke-width="1.800"/></svg>
        </div>
      </div>
      <div class="canvas">
        <svg class="sheet" viewBox="364 204 1270 795" width="1270" height="795">
          <defs>
            <pattern id="hatch" width="3.4" height="3.4" patternUnits="userSpaceOnUse" patternTransform="rotate(45)"><rect width="3.400" height="3.400" fill="#c4ced6"/><rect width="1.100" height="3.400" fill="#5f7e98"/></pattern>
            <g id="disk"><rect width="7.500" height="37" rx="2.500" fill="#d2d3d5" stroke="#557a9f" stroke-width="1.300"/></g>
            <g id="hd"><rect width="8" height="37" rx="2" fill="url(#hatch)" stroke="#6d8fb0" stroke-width="1"/><rect y="11" width="8" height="15" fill="#d2d3d5" stroke="#6d8fb0" stroke-width=".8"/></g>
            <g id="hf"><rect width="8" height="37" rx="2" fill="url(#hatch)" stroke="#3f6690" stroke-width="1.100"/></g>
          </defs>

          <g fill="none" stroke="#8d9298" stroke-width="1">
            <path d="M512 207v11" />
            <rect x="512.500" y="218.500" width="1048" height="741"/>
            <rect x="537.500" y="243.500" width="998" height="691"/>
            <rect x="537.500" y="243.500" width="125" height="25"/>
            <path d="M1590 207V959M1568 959h22" stroke-dasharray="14 7"/>
          </g>
          <text class="sm mono" x="560" y="258">ZE12*0x81*×00*01</text>

          <!-- shaft -->
          <g fill="none">
            <path d="M584 429H1477" stroke="#878d92"/>
            <path d="M589 423H1440M589 436H1440" stroke="#3c6899" stroke-width="1.600"/>
            <path d="M600 429h9m12 0h9m30 0h7m20 0h7m20 0h7m12 0h7m12 0h7m10 0h7m10 0h7m10 0h7m10 0h7m10 0h7m10 0h7m10 0h7m10 0h7m10 0h7m10 0h7m10 0h7m10 0h7m10 0h7m10 0h7m10 0h7m10 0h7m10 0h7m10 0h7m10 0h7m10 0h7m10 0h7" stroke="#eef0f0"/>
          </g>

          <!-- plain discs -->
          <use href="#disk" x="778" y="411"/><use href="#disk" x="804" y="411"/><use href="#disk" x="830" y="411"/>
          <use href="#disk" x="856" y="411"/><use href="#disk" x="882" y="411"/><use href="#disk" x="908" y="411"/>
          <use href="#disk" x="935" y="411"/><use href="#disk" x="961" y="411"/><use href="#disk" x="987" y="411"/>
          <use href="#disk" x="1014" y="411"/><use href="#disk" x="1040" y="411"/><use href="#disk" x="1066" y="411"/>
          <use href="#disk" x="1092" y="411"/><use href="#disk" x="1118" y="411"/><use href="#disk" x="1144" y="411"/>
          <use href="#disk" x="1170" y="411"/><use href="#disk" x="1196" y="411"/><use href="#disk" x="1222" y="411"/>
          <use href="#disk" x="1248" y="411"/><use href="#disk" x="1274" y="411"/>

          <!-- hatched parts, left -->
          <use href="#hd" x="590" y="411"/>
          <path d="M598 421h5v14h-5M603 421v16" fill="none" stroke="#5d81a6"/>
          <path d="M627 421h5v16h-5z" fill="#d2d3d5" stroke="#5d81a6"/>
          <use href="#hd" x="633" y="411"/>
          <use href="#hd" x="658" y="411"/>
          <use href="#hd" x="674" y="411"/>
          <rect x="681.500" y="421" width="8" height="18" fill="#b26b0d" stroke="#5f6f80"/>
          <rect x="666" y="421" width="8" height="2.500" fill="#ee2230"/>
          <rect x="666" y="435" width="8" height="2.500" fill="#ee2230"/>
          <use href="#hf" x="700" y="411"/><use href="#hf" x="726" y="411"/><use href="#hf" x="752" y="411"/>
          <path d="M730 406v58M756 406v58" stroke="#8a8f94" stroke-width="1.300"/>

          <!-- hatched parts, right -->
          <use href="#hf" x="1300" y="411"/><use href="#hf" x="1327" y="411"/><use href="#hf" x="1352" y="411"/>
          <use href="#hd" x="1378" y="411"/><use href="#hd" x="1386" y="411"/>
          <path d="M1418 421h5v17h-5z" fill="#d2d3d5" stroke="#5d81a6"/>
          <rect x="1406" y="416" width="12" height="28" fill="url(#hatch)" stroke="#6d8fb0"/>
          <rect x="1406" y="425" width="12" height="9" fill="#d2d3d5" stroke="#6d8fb0"/>
          <rect x="1447" y="414" width="5" height="31" fill="url(#hatch)" stroke="#6d8fb0"/>
          <rect x="1452" y="408" width="13" height="42" fill="url(#hatch)" stroke="#6d8fb0"/>
          <rect x="1465" y="406" width="7" height="47" rx="2" fill="url(#hatch)" stroke="#6d8fb0"/>
          <path d="M1440 421h7v17h-7z" fill="#d2d3d5" stroke="#6d8fb0"/>
          <rect x="1452" y="422" width="20" height="14" fill="#d2d3d5" stroke="#6d8fb0"/>

          <!-- dimension and leader lines -->
          <g fill="none" stroke="#23303f" stroke-width=".9">
            <path d="M603 379 594 411M603 379 637 411M653 381 660 411M694 381 673 420M708 381 685 421M734 381 717 422"/>
            <path d="M1396 366 1383 410M1409 368 1393 407M1425 367 1414 415M1445 366 1428 427M1468 369 1460 408"/>
          </g>
          <g fill="none" stroke="#5e7a7e" stroke-width="1.200">
            <path d="M589 398V512M657 398V478M642 398v12M667 398v12M674 398v12M1395 402V478M1473 401V512"/>
            <path d="M589 400H688" stroke="#6f777c"/>
            <path d="M1395 402H1473M1307 400h20" stroke="#777d80"/>
            <path d="M1307 400v11M1327 400v11" stroke="#2f6a5a"/>
            <path d="M603 437v27M667 450v14M1386 450v14M1395 450v14M1406 444v20M1422 438v26M1448 445v22" stroke="#5e7a7e"/>
          </g>
          <path d="M589 477H1395" stroke="#787d82" stroke-width="1.200"/>
          <path d="M589 510H1473" stroke="#13304f" stroke-width="1.200"/>
          <path d="M589 462h14M657 462h10M730 462h61M1386 463h9M1406 463h16M1448 466h25" stroke="#13304f"/>
          <path d="M1319 423v38" stroke="#8a8f94" stroke-width="1.300"/>

          <g class="dim">
            <text x="600" y="378">8</text><text x="649" y="381">4</text><text x="694" y="381">7</text><text x="708" y="381">6</text><text x="734" y="381">9</text>
            <text x="614" y="400">6</text><text x="648" y="400">H</text><text x="668" y="399">7</text>
            <text x="1394" y="365">5</text><text x="1408" y="367">4</text><text x="1424" y="366">3</text><text x="1444" y="365">1</text><text x="1467" y="368">2</text>
            <text x="1313" y="400">17</text><text x="1397" y="401">10</text><text x="1435" y="401">58</text>
            <text x="590" y="460">(12)</text><text x="658" y="460">(8)</text><text x="761" y="461">28x23(5H)</text>
            <text x="1387" y="461">(8)</text><text x="1408" y="462">(14)</text><text x="1451" y="464">(22.5)</text>
            <text x="621" y="476">60</text><text x="1021" y="474">850</text><text x="1026" y="508">778</text>
            <text class="rot" x="1316" y="458" transform="rotate(-90 1316 458)">Ø.12</text>
          </g>

          <!-- left parts list -->
          <path class="grid" d="M887 839H1211M887 857H1211M887 874H1211M887 892H1211M887 909H1211M887 934H1211M887 839V934M907 839V934M972 839V934M1047 839V934M1067 839V934M1122 839V934M1172 839V934M1147 839V922M1122 922H1172"/>
          <!-- right parts list + title block -->
          <path class="grid" d="M1211 749H1536M1211 767H1536M1211 784H1536M1211 802H1536M1211 819H1536M1211 837H1536M1211 862H1536M1211 749V934M1231 749V862M1296 749V862M1371 749V862M1391 749V862M1446 749V862M1496 749V862M1536 749V934M1471 749V849M1446 849H1496M1456 862V896M1496 862V896M1456 873H1536M1456 884H1536M1211 896H1536M1211 910H1333M1211 922H1333M1333 919H1408M1408 915H1536M1211 934H1536M1241 896V934M1291 896V934M1333 896V934M1408 896V934M1443 896V934"/>

          <g class="cell">
            <text x="897" y="852">9</text><text x="897" y="869">8</text><text x="897" y="887">7</text><text x="897" y="904">6</text>
            <text class="l" x="912" y="852">A134</text><text class="l sp" x="912" y="869">(A333)</text><text class="l sp" x="909" y="886">A211B</text><text class="l" x="911" y="904">B213</text>
            <text x="1057" y="852">27</text><text x="1057" y="869">1</text><text x="1057" y="887">1</text><text x="1057" y="904">1</text>
            <text class="l" x="1075" y="852">PP</text><text class="l" x="1071" y="904">HCPP</text>
            <text x="1191" y="852">Ø12-17</text><text x="1191" y="869">L=12</text><text x="1191" y="887">L=7</text>
          </g>
          <g class="cjk">
            <text class="lg" x="1009" y="853">间隔套</text><text class="lg" x="1006" y="871">直齿轮</text><text class="lg" x="1006" y="889">间隔套</text><text class="lg" x="1006" y="905">黄色卡</text>
            <text x="897" y="924">序号</text><text x="940" y="924">代号</text><text x="1009" y="924">名称</text><text x="1057" y="924">数量</text><text x="1094" y="924">材料</text>
            <text x="1135" y="918">单件</text><text x="1160" y="918">总计</text><text x="1147" y="932">重量</text><text x="1191" y="924">备注</text>
          </g>
          <text class="tiny navy" x="1134" y="852">非透明色</text>
          <text class="tiny reddy" x="1158" y="887">(自购)</text>

          <g class="cell">
            <text x="1221" y="761">5</text><text x="1221" y="779">4</text><text x="1221" y="796">3</text><text x="1221" y="814">2</text><text x="1221" y="831">1</text>
            <text class="l" x="1234" y="761">A134</text><text class="l" x="1234" y="779">B219B</text><text class="l" x="1234" y="796">B311</text><text class="l" x="1236" y="814">(512)</text>
            <text x="1381" y="761">28</text><text x="1381" y="779">2</text><text x="1381" y="796">1</text><text x="1381" y="814">1</text><text x="1381" y="831">1</text>
            <text class="l" x="1394" y="761">EPDM</text><text class="l" x="1394" y="779">HCPP</text><text class="l" x="1394" y="796">PP</text><text class="l" x="1394" y="814">PP</text><text class="l" x="1394" y="831">Ti</text>
            <text x="1515" y="761">Ø32-6</text><text x="1515" y="779">L=8</text><text x="1515" y="831">Ø10-779</text>
          </g>
          <g class="cjk">
            <text class="lf" x="1298" y="761">橡胶轮片</text><text class="lf" x="1298" y="778">持动轮</text><text class="lf" x="1298" y="796">直齿轮</text><text class="lf" x="1298" y="813">组合齿轮</text><text class="lf" x="1298" y="830">传动轴</text>
            <text x="1221" y="852">序号</text><text x="1263" y="852">代号</text><text x="1334" y="852">名称</text><text x="1381" y="852">数量</text><text x="1418" y="852">材料</text>
            <text x="1458" y="846">单件</text><text x="1483" y="846">总计</text><text x="1471" y="858">重量</text><text x="1516" y="852">备注</text>
          </g>

          <rect x="1217" y="867" width="31" height="25" fill="#eef0f4"/>
          <path d="M1232.500 868 1246 874v12l-13.500 5-13.500-5v-12z" fill="none" stroke="#1a2f70"/>
          <text class="logo" x="1232.500" y="885">BC</text>
          <text class="company" x="1257" y="888">无锡博谊诚电子有限公司</text>

          <g class="tblk">
            <text x="1476" y="871">共 <tspan class="grn">12</tspan> 页</text><text x="1516" y="871">第 <tspan class="grn">1</tspan> 页</text>
            <text x="1476" y="882">比　例</text><text class="grn" x="1516" y="882">1:2.2</text>
            <text x="1476" y="893">重　量</text>
            <text x="1227" y="906">制　图</text><text x="1227" y="919">校　对</text><text x="1227" y="931">审　核</text>
            <text class="na" x="1265" y="903">SHENGCHAO</text><text class="na" x="1265" y="917">W.GUOGONG</text><text class="na" x="1265" y="929">W.GUOGONG</text>
            <text class="dt" x="1312" y="905">4/7-2022</text><text class="dt" x="1312" y="919">4/7-2022</text><text class="dt" x="1312" y="931">4/7-2022</text>
            <text class="ol" x="1369" y="930">黄色卡</text>
            <text x="1423" y="908">产品名称</text><text x="1423" y="927">产品图号</text>
            <text class="dt wide" x="1489" y="928">16.004.1870.2132</text>
          </g>
        </svg>
        <span class="watermark">UG爱好者论坛@shengchao88</span>
      </div>
    </section>
  </main>

  <aside class="dialog">
    <div class="dlg-title">
      <svg class="dlg-gear" viewBox="0 0 16 16"><path d="M8 0l1.300 2.200 2.400-.7.500 2.500 2.500.5-.7 2.400L16 8l-2 1.300.7 2.400-2.500.5-.5 2.500-2.400-.7L8 16l-1.300-2-2.400.7-.5-2.500-2.500-.5.700-2.400L0 8l2-1.300-.7-2.400 2.500-.5.500-2.500 2.400.7z" fill="#fff"/><circle cx="8" cy="8" r="3.200" fill="#5a9fba"/></svg>
      <span class="dlg-name">导出 PDF</span>
      <svg class="dlg-reset" viewBox="0 0 14 14"><path d="M10 2.600A5.200 5.200 0 1 1 3 3.400" fill="none" stroke="#fff" stroke-width="1.800"/><path d="M7.500 0 12 1.500 9.500 5.500z" fill="#fff"/></svg>
      <svg class="dlg-close" viewBox="0 0 12 12"><path d="M1 1l10 10M11 1 1 11" stroke="#fff" stroke-width="2.200"/></svg>
    </div>
    <div class="dlg-sec sec1">
      <div class="sec-head"><span>源</span><svg class="caret" viewBox="0 0 12 8"><path d="M1 7l5-5 5 5" fill="none" stroke="#0a6a8c" stroke-width="2"/></svg></div>
      <div class="list-wrap">
        <div class="listbox">
          <div class="li">当前显示</div>
          <div class="li">Sheet 1&nbsp; 950x700mm</div>
          <div class="li sel">Sheet 2&nbsp; 950x700mm</div>
        </div>
        <div class="list-btns">
          <button class="sq"><svg viewBox="0 0 12 12"><path d="M6 1l5 5H8v5H4V6H1z" fill="#2f94c8" stroke="#0e6898" stroke-width=".6"/></svg></button>
          <button class="sq dis"><svg viewBox="0 0 12 12"><path d="M6 11 1 6h3V1h4v5h3z" fill="#9a9a9a"/></svg></button>
        </div>
      </div>
    </div>
    <div class="dlg-sec sec2">
      <div class="sec-head sh2"><span>目标</span><svg class="caret" viewBox="0 0 12 8"><path d="M1 7l5-5 5 5" fill="none" stroke="#0a6a8c" stroke-width="2"/></svg></div>
      <div class="fld-label">保存 PDF 文件</div>
      <div class="fld-row">
        <div class="fld"><span class="sel-text">F:\16.004.1870.2132.pdf</span></div>
        <button class="sq sq-f"><svg viewBox="0 0 18 16"><path d="M1 4h6l1 2h7v8H2z" fill="#e6c257" stroke="#a88420" stroke-width=".7"/><path d="M1 14 4 7h13l-3 7z" fill="#fbe68a" stroke="#a88420" stroke-width=".7"/><path d="M11 0h2v2h2v2h-2v2h-2V4H9V2h2z" fill="#33a83c"/></svg></button>
      </div>
      <label class="chk"><span class="box"></span><span>附加到 PDF 文件</span></label>
    </div>
    <div class="dlg-foot">
      <button class="btn primary">确定</button>
      <button class="btn">应用</button>
      <button class="btn">取消</button>
    </div>
  </aside>
</div>
</body>
</html>
```

FILE: styles.css
```css
* { box-sizing: border-box; }
html, body { margin: 0; padding: 0; }
body {
  width: 1634px; height: 999px; overflow: hidden;
  font-family: "Open Sans", "Noto Sans CJK SC", sans-serif;
  font-size: 12px; color: #111; background: #f0f0f0;
}
.defs { position: absolute; }
.app { position: relative; width: 1634px; height: 999px; display: flex; flex-direction: column; overflow: hidden; }

/* title */
.titlebar { height: 26px; flex: none; display: flex; align-items: center; padding: 0 0 3px 308px; background: #f0f0f0; font-size: 11px; }
.winicon { width: 15px; height: 16px; margin-left: 8px; margin-top: 3px; }
.qa-label { margin-left: 5px; }
.tri { display: inline-block; width: 0; height: 0; border-left: 3.500px solid transparent; border-right: 3.500px solid transparent; border-top: 4px solid #333; }
.tri.up { border-top: 0; border-bottom: 4px solid #aaa; }
.qa-tri { margin-left: 4px; }
.tri-menu { display: inline-block; width: 7px; height: 7px; margin-left: 4px; border-top: 1px solid #333; }
.tri-menu::after { content: ""; display: block; margin-top: 2px; width: 0; height: 0; border-left: 3.500px solid transparent; border-right: 3.500px solid transparent; border-top: 4px solid #333; }
.apptitle { margin-left: 639px; font-size: 13px; }

/* tabs */
.menubar { height: 28px; flex: none; background: #bbbbbb; display: flex; align-items: center; gap: 25px; padding: 0 0 2px 330px; font-size: 13px; }

/* ribbon */
.ribbon { height: 94px; flex: none; display: flex; background: #f0f0f0; border-bottom: 2px solid #bdbdbd; }
.group { flex: none; height: 92px; display: flex; flex-direction: column; position: relative; }
.group::after { content: ""; position: absolute; right: 0; top: 5px; bottom: 4px; width: 1px; background: #c4c4c4; }
.g1 { width: 448px; }
.g2 { width: 283px; }
.g3 { width: 121px; }
.g4 { width: 109px; }
.g5 { width: 62px; }
.g6 { width: 103px; }
.g7 { width: 398px; }
.g8 { width: 110px; }
.g8::after { display: none; }
.gbody { height: 77px; flex: none; display: flex; }
.glabel { height: 15px; display: flex; align-items: center; color: #14809e; font-size: 11.500px; line-height: 15px; }
.gl { flex: 1; text-align: center; white-space: nowrap; }
.gl1 { padding-left: 317px; }
.gl-left { text-align: left; padding-left: 1px; }
.gl8 { padding-left: 57px; }
.ga { width: 17px; flex: none; display: flex; justify-content: center; }
.ga-n { width: 23px; justify-content: flex-start; }
.ga::after { content: ""; width: 0; height: 0; border-left: 3.500px solid transparent; border-right: 3.500px solid transparent; border-top: 4px solid #333; }

.i { width: 18px; height: 18px; fill: none; stroke: #111; justify-self: center; align-self: center; }
.i16 { width: 16px; height: 16px; fill: none; stroke: #111; flex: none; }
.ic { width: 18px; height: 18px; margin: 0 2.500px; flex: none; fill: none; stroke: #111; }
.ic-w { overflow: visible; }
.it { font: bold 7px "Liberation Sans", sans-serif; fill: #111; stroke: none; }
.it6 { font: 6px "Liberation Sans", sans-serif; fill: #111; stroke: none; }
.it.blue, .it6.blue { fill: #1a1ac0; }
.it.red, .it6.red { fill: #c00; font-weight: bold; }
.it6.bold { font-weight: bold; }

.big { display: flex; flex-direction: column; align-items: center; font-size: 11px; line-height: 16px; padding-top: 3px; flex: none; white-space: nowrap; }
.bigicon { height: 36px; margin-bottom: 2px; display: flex; align-items: center; justify-content: center; }
.b-quick { width: 30px; margin-left: 331px; }
.q { width: 30px; height: 24px; }
.b-layer { width: 44px; margin-left: 12px; }
.b-move { width: 55px; margin-left: 8px; }
.b-note { width: 30px; margin-left: 11px; }
.b-edit { width: 44px; margin-left: 10px; }
.bg1 { width: 30px; height: 30px; }
.ba { width: 29px; height: 29px; overflow: visible; }
.bg2 { width: 32px; height: 34px; }
.bigA { font: 30px "Liberation Serif", serif; font-weight: bold; text-anchor: middle; fill: #000; }
.aa1 { font: 15px "Liberation Sans", sans-serif; fill: #2233a0; }
.aa2 { font: italic bold 26px "Liberation Serif", serif; fill: #1a2ec0; }

.ig { display: grid; grid-auto-rows: 21px; padding-top: 3px; align-content: start; }
.ig3 { grid-template-columns: repeat(3, 25px); margin-left: 5px; }
.ig4 { grid-template-columns: repeat(4, 25px) 10px; margin-left: 5px; }
.ig4 .tri { align-self: center; justify-self: center; }
.rs { grid-column: 1; }

.gallery { width: 91px; height: 65px; margin: 5px 0 0 9px; background: #fff; border: 1px solid #c8c8c8; display: grid; grid-template-columns: repeat(4, 1fr); grid-template-rows: repeat(3, 1fr); flex: none; }
.galside { display: flex; flex-direction: column; align-items: center; gap: 17px; width: 16px; padding-top: 13px; margin-left: 1px; }
.galside .tri-menu { margin: -2px 0 0; }

.tlist { flex-direction: column; padding: 1px 0 0 13px; }
.tline { height: 22px; display: flex; align-items: center; gap: 4px; font-size: 11px; white-space: nowrap; }

.irow { display: flex; align-items: center; height: 30px; }
.g6 .gbody, .g7 .gbody, .g8 .gbody { flex-direction: column; padding: 6px 0 0 4px; }
.vs { display: block; width: 1px; height: 24px; flex: none; margin: 0 3px; background: #c4c4c4; }
.vs-n { margin: 0 2px; }
.vs-m { margin: 0 2.500px; }

/* toolbar */
.toolbar { height: 32px; flex: none; display: flex; align-items: center; background: #f0f0f0; border-bottom: 2px solid #a8a8a8; }
.combo { width: 380px; height: 19px; background: #fff; border: 1px solid #b0b0b0; display: flex; align-items: center; justify-content: flex-end; padding-right: 6px; }
.combo-arrow { width: 0; height: 0; border-left: 4px solid transparent; border-right: 4px solid transparent; border-top: 5px solid #888; }
.t { width: 18px; height: 18px; margin: 0 3.300px; flex: none; fill: none; }
.tw1 { margin-left: 8px; }
.tw2 { margin-left: 5px; }
.selbox { width: 16px; height: 18px; margin-left: 3px; border: 1px solid #d01818; background: #fff; flex: none; display: flex; align-items: center; justify-content: center; }
.selbox .i16 { width: 14px; height: 14px; }
.ta { display: flex; justify-content: center; align-items: center; flex: none; }
.ta16 { width: 15px; }
.ta15 { width: 15px; }
.ta11 { width: 9px; }
.ta-last { margin-left: 4px; }
.tb-vs { margin: 0 10px 0 6px; height: 26px; }
.tb-vs2 { margin: 0 0 0 8px; height: 26px; }

/* workspace */
.work { flex: 1; min-height: 0; display: flex; }
.rail { width: 32px; flex: none; background: #bababa; border-right: 1px solid #8f8f8f; display: flex; flex-direction: column; align-items: center; padding: 189px 0 0 3px; }
.ri { width: 26px; height: 26px; flex: none; }
.ri2 { margin-top: 27px; }
.ri3 { margin-top: 28px; }
.ri4 { margin-top: 16px; }
.ri5 { margin-top: 18px; }

.nav { width: 332px; flex: none; display: flex; flex-direction: column; padding-left: 6px; background: #f0f0f0; }
.navtop { height: 28px; flex: none; display: flex; justify-content: flex-end; padding: 10px 12px 0 0; }
.winbox { width: 12px; height: 10px; border: 1px solid #111; border-top-width: 2px; background: #fff; }
.navbox { width: 316px; flex: 1; min-height: 0; display: flex; flex-direction: column; border-left: 1px solid #bdbdbd; border-right: 1px solid #bdbdbd; border-top: 1px solid #d0d0d0; background: #fff; }
.navhead { height: 22px; flex: none; border-bottom: 1px solid #d0d0d0; background: #f0f0f0; font-size: 12px; text-align: right; overflow: hidden; line-height: 20px; color: #555; }
.nh-cut { display: inline-block; width: 5px; overflow: hidden; }
.navbody { flex: 1; min-height: 0; display: flex; }
.tree { width: 297px; flex: none; overflow: hidden; }
.row { height: 20px; display: flex; align-items: center; border-bottom: 1px solid #e6e6e6; font-size: 12.400px; white-space: nowrap; margin-left: 1px; }
.row:nth-child(odd) { background: #f7f7f7; }
.row.off { color: #a6a6a6; }
.name { width: 199px; height: 100%; flex: none; display: flex; align-items: center; padding-left: 28px; border-right: 1px solid #e6e6e6; position: relative; }
.twig { display: block; width: 11px; height: 20px; flex: none; background-image: repeating-linear-gradient(to bottom, #777 0 1px, transparent 1px 2px), repeating-linear-gradient(to right, #777 0 1px, transparent 1px 2px); background-size: 1px 100%, 9px 1px; background-position: 0 0, 1px 10px; background-repeat: no-repeat; }
.cb { width: 12px; height: 12px; margin-left: 1px; flex: none; }
.ti { width: 16px; height: 16px; margin: 0 3px 0 2px; flex: none; }
.ok { width: 12px; height: 12px; margin-left: 7px; flex: none; }
.star::before { content: ""; position: absolute; left: 37px; top: 3px; width: 8px; height: 8px; background: #f3d02a; clip-path: polygon(50% 0, 62% 38%, 100% 50%, 62% 62%, 50% 100%, 38% 62%, 0 50%, 38% 38%); }

.vscroll { flex: 1; background: #f0f0f0; display: flex; flex-direction: column; align-items: center; }
.chev { display: block; width: 8px; height: 8px; flex: none; border-left: 2px solid #555; border-top: 2px solid #555; }
.chev-up { transform: rotate(45deg); margin-top: 8px; margin-right: 3px; }
.chev-down { transform: rotate(225deg); margin: auto 3px 6px 0; }
.vthumb { width: 14px; height: 140px; flex: none; margin-top: 11px; background: #c8c8c8; align-self: flex-start; }
.hscroll { height: 10px; flex: none; background: #f0f0f0; display: flex; align-items: center; padding-left: 6px; }
.hthumb { width: 192px; height: 10px; margin-left: 6px; background: #c8c8c8; flex: none; }
.chev-left { transform: rotate(-45deg) scale(.8); }
.chev-right { transform: rotate(135deg) scale(.8); margin-left: 70px; }

.view { flex: 1; min-width: 0; display: flex; flex-direction: column; background: #f0f0f0; }
.tabrow { height: 24px; flex: none; border-bottom: 3px solid #5a9fba; }
.doctab { width: 184px; height: 21px; background: #5a9fba; display: flex; align-items: center; color: #fff; padding-left: 6px; font-size: 12.300px; }
.tabicon { width: 18px; height: 16px; flex: none; }
.tabname { margin-left: 2px; white-space: nowrap; }
.tabdoc { width: 10px; height: 12px; margin-left: 5px; flex: none; }
.tabx { width: 10px; height: 10px; margin-left: 6px; flex: none; }
.canvas { flex: 1; min-height: 0; background: #d2d3d5; position: relative; overflow: hidden; }
.sheet { display: block; filter: blur(.4px); }
.sm { font-size: 7px; fill: #666; letter-spacing: .8px; }
.mono { font-family: "Liberation Mono", monospace; }
.dim text { font: 7px "Liberation Sans", sans-serif; fill: #2a2af0; letter-spacing: .6px; }
.grid { fill: none; stroke: #868a90; stroke-width: 1.100; }
.cell text { font: 8px "Liberation Sans", sans-serif; fill: #8a8d92; text-anchor: middle; }
.cell .l { text-anchor: start; }
.cell .sp { fill: #666; letter-spacing: 1px; font-size: 7px; }
.cjk text { font: bold 8px "Noto Sans CJK SC", sans-serif; fill: #6c6f74; text-anchor: middle; letter-spacing: 1px; }
.cjk .lg { font-size: 10px; }
.cjk .lf { font-size: 9.500px; text-anchor: start; letter-spacing: 1px; }
.tiny { font: bold 6px "Noto Sans CJK SC", sans-serif; text-anchor: middle; }
.navy { fill: #0a1a50; }
.reddy { fill: #e00; }
.logo { font: bold 21px "Liberation Serif", serif; fill: #142a70; text-anchor: middle; letter-spacing: -3px; }
.company { font: bold 17px "Noto Sans CJK SC", sans-serif; fill: #74767a; letter-spacing: .5px; }
.tblk text { font: bold 6px "Noto Sans CJK SC", sans-serif; fill: #555; text-anchor: middle; }
.tblk .na { font-family: "Liberation Sans", sans-serif; fill: #333; }
.tblk .dt { font: bold 7px "Liberation Mono", monospace; fill: #1a1af0; letter-spacing: 1px; }
.tblk .wide { font-weight: normal; letter-spacing: 1.300px; }
.tblk .ol { fill: #8a8a10; }
.tblk .grn { fill: #4a9a5a; font-family: "Liberation Sans", sans-serif; font-size: 7px; }
.watermark { position: absolute; right: 2px; bottom: 3px; font: 14.500px "Liberation Serif", "Noto Sans CJK SC", serif; color: #f4f4f4; text-shadow: 0 0 1px #222, 1px 1px 1px #444; white-space: nowrap; letter-spacing: .6px; }

/* dialog */
.dialog { position: absolute; left: 0; top: 0; width: 328px; height: 352px; background: #dcdcdc; border-right: 1px solid #a6a6a6; border-bottom: 1px solid #a6a6a6; display: flex; flex-direction: column; z-index: 5; }
.dlg-title { height: 24px; flex: none; background: #5a9fba; color: #fff; display: flex; align-items: center; padding: 0 0 1px 7px; }
.dlg-gear { width: 15px; height: 15px; flex: none; }
.dlg-name { margin-left: 7px; font-size: 14.500px; }
.dlg-reset { width: 13px; height: 13px; margin-left: 197px; flex: none; }
.dlg-close { width: 12px; height: 12px; margin-left: 7px; flex: none; }
.dlg-sec { margin: 0 6px; background: #f0f0f0; flex: none; }
.sec1 { height: 165px; margin-top: 4px; border-bottom: 1px solid #9c9c9c; padding: 0 9px; }
.sec2 { height: 108px; margin-top: 4px; border-bottom: 1px solid #9c9c9c; padding: 0 9px; }
.sec-head { height: 25px; display: flex; align-items: center; justify-content: space-between; color: #0f7292; font-size: 14px; margin: 0 -4px 0 -2px; padding-bottom: 2px; }
.sec-head .caret { width: 11px; height: 8px; }
.sh2 { margin-left: -1px; }
.list-wrap { display: flex; gap: 2px; margin-top: 5px; }
.listbox { width: 272px; height: 126px; flex: none; background: #fff; border: 1px solid #a6a6a6; padding: 1px 1px 0; }
.li { height: 17px; line-height: 17px; font-size: 12.400px; white-space: nowrap; }
.sel { background: #8cc3d3; }
.list-btns { display: flex; flex-direction: column; gap: 2px; }
.sq { width: 24px; height: 24px; padding: 3px; background: #f0f0f0; border: 1px solid #9a9a9a; display: flex; align-items: center; justify-content: center; }
.sq svg { width: 13px; height: 13px; }
.sq.dis { border-color: #c8c8c8; }
.sq-f svg { width: 18px; height: 16px; }
.fld-label { font-size: 12px; line-height: 16px; margin-top: 8px; white-space: nowrap; }
.fld-row { display: flex; gap: 2px; margin-top: 4px; padding-left: 2px; }
.fld { width: 270px; height: 23px; background: #fff; border: 1px solid #a6a6a6; padding: 3px 0 0 4px; font-size: 12.400px; line-height: 16px; }
.sel-text { display: inline-block; background: #0078d7; color: #fff; border-left: 1px solid #f08020; white-space: nowrap; }
.chk { display: flex; align-items: center; gap: 5px; font-size: 12px; margin-top: 6px; height: 14px; }
.box { width: 13px; height: 13px; border: 1px solid #555; background: #fff; flex: none; }
.dlg-foot { display: flex; justify-content: flex-end; gap: 5px; padding: 12px 15px 0 0; }
.btn { width: 54px; height: 25px; padding: 0; background: #e0e0e0; border: 1px solid #8c8c8c; font: 13px "Noto Sans CJK SC", sans-serif; color: #111; }
.btn.primary { background: #71b2c8; border-color: #71b2c8; color: #eaf5f8; }
```
